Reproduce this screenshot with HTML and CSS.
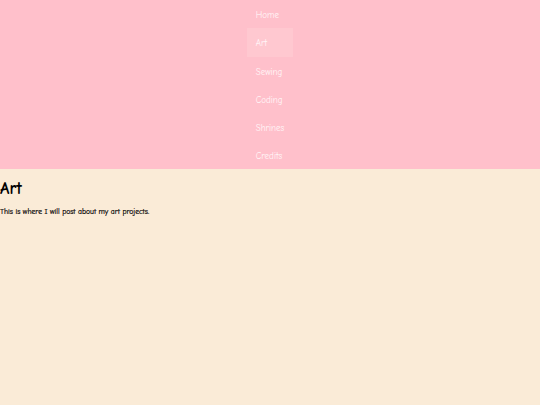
FILE: index.html
```html
<!DOCTYPE html>
<html>
<head>
<meta charset="utf-8">
<link rel="stylesheet" href="styles.css">
</head>
<body>
<nav class="nav">
  <ul class="nav-list">
    <li><a class="nav-link" href="#">Home</a></li>
    <li><a class="nav-link active" href="#">Art</a></li>
    <li><a class="nav-link" href="#">Sewing</a></li>
    <li><a class="nav-link" href="#">Coding</a></li>
    <li><a class="nav-link" href="#">Shrines</a></li>
    <li><a class="nav-link" href="#">Credits</a></li>
  </ul>
</nav>
<main class="content">
  <h2 class="title">Art</h2>
  <p class="text">This is where I will post about my art projects.</p>
</main>
</body>
</html>
```
FILE: styles.css
```css
html, body {
  margin: 0;
  padding: 0;
}
body {
  background: #faebd7;
  font-family: "Comic Sans MS", "Comic Neue", "DejaVu Sans", sans-serif;
  color: #000;
  height: 405px;
}
.nav {
  background: #ffc0cb;
  height: 169px;
  display: flex;
  justify-content: center;
}
.nav-list {
  list-style: none;
  margin: 0;
  padding: 0;
  display: flex;
  flex-direction: column;
  align-items: stretch;
}
.nav-link {
  display: block;
  height: 28.3px;
  line-height: 26.3px;
  padding: 2px 9px 0 9px;
  font-size: 9px;
  color: #fff6f8;
  text-decoration: none;
  box-sizing: border-box;
}
.nav-link.active {
  background: #ffc8d0;
}
.content {
  padding: 0;
}
.title {
  margin: 10px 0 0 0;
  font-size: 17px;
  font-weight: bold;
  line-height: 20px;
}
.text {
  margin: 8px 0 0 0;
  font-size: 7.6px;
  line-height: 10px;
  -webkit-text-stroke: 0.2px #000;
}
```
